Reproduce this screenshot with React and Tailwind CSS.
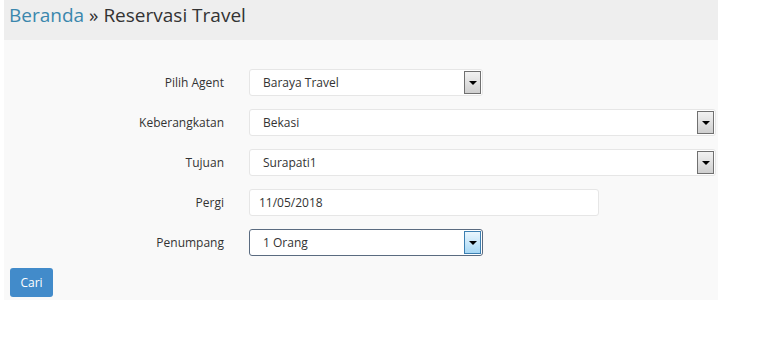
import { useState } from 'react';

function ArrowBox({ focused }) {
  return (
    <div
      className={`absolute right-[1px] top-[1px] bottom-[1px] w-[17px] flex items-center justify-center border ${
        focused
          ? 'border-[#3c7fb1] bg-gradient-to-b from-[#eaf6fd] to-[#a7d8f5]'
          : 'border-[#707070] bg-gradient-to-b from-[#f2f2f2] to-[#cfcfcf]'
      }`}
    >
      <div className="w-0 h-0 border-l-[4px] border-r-[4px] border-t-[4px] border-l-transparent border-r-transparent border-t-black" />
    </div>
  );
}

function SelectBox({ value, width, focused }) {
  return (
    <div
      className={`relative h-[27px] bg-white rounded-[3px] border flex items-center pl-[13px] ${
        focused ? 'border-[#5a6b80]' : 'border-[#e6e6e6]'
      } ${width}`}
    >
      <span className="text-[12px] text-[#333]">{value}</span>
      <ArrowBox focused={focused} />
    </div>
  );
}

function Row({ label, children }) {
  return (
    <div className="flex items-center h-[27px]">
      <div className="w-[220px] text-right text-[12px] text-[#333]">{label}</div>
      <div className="ml-[25px]">{children}</div>
    </div>
  );
}

export default function App() {
  const [tanggal] = useState('11/05/2018');

  return (
    <div className="w-[777px] h-[341px] bg-white font-['Open_Sans',sans-serif]">
      <div className="ml-[4px] w-[714px]">
        <div className="h-[40px] bg-[#eeeeee] pl-[5px] pt-[2px]">
          <h1 className="text-[19px] leading-[27px] text-[#333]">
            <span className="text-[#3a87ad]">Beranda</span> » Reservasi Travel
          </h1>
        </div>
        <div className="bg-[#f9f9f9] h-[260px] pt-[29px]">
          <div className="flex flex-col gap-[13px]">
            <Row label="Pilih Agent">
              <SelectBox value="Baraya Travel" width="w-[234px]" />
            </Row>
            <Row label="Keberangkatan">
              <SelectBox value="Bekasi" width="w-[467px]" />
            </Row>
            <Row label="Tujuan">
              <SelectBox value="Surapati1" width="w-[467px]" />
            </Row>
            <Row label="Pergi">
              <div className="h-[27px] w-[350px] bg-white rounded-[3px] border border-[#e6e6e6] flex items-center pl-[9px] text-[12px] text-[#333]">
                {tanggal}
              </div>
            </Row>
            <Row label="Penumpang">
              <SelectBox value="1 Orang" width="w-[234px]" focused />
            </Row>
          </div>
          <button className="mt-[12px] ml-[6px] h-[29px] w-[43px] bg-[#428bca] rounded-[3px] text-white text-[12px]">
            Cari
          </button>
        </div>
      </div>
    </div>
  );
}
